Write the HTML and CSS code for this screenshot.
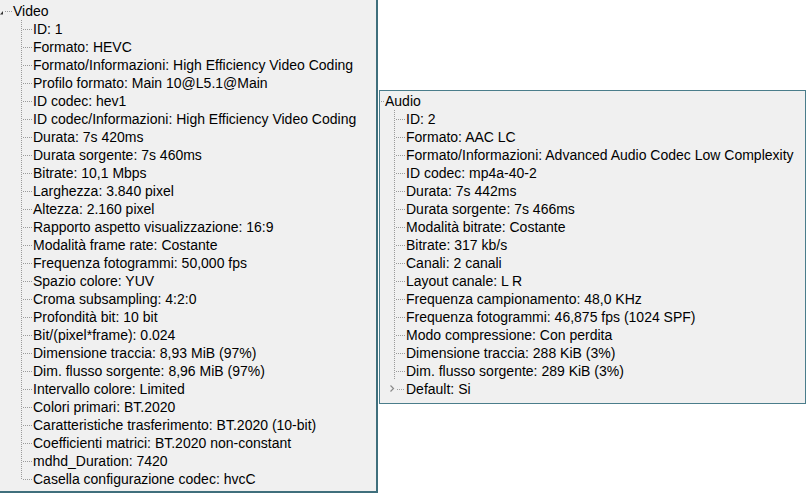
FILE: index.html
```html
<!DOCTYPE html>
<html>
<head>
<meta charset="utf-8">
<link rel="stylesheet" href="styles.css">
</head>
<body>
<div class="desk">
  <section class="panel video">
    <div class="head">
      <span class="exp"><svg width="5" height="18" viewBox="0 0 5 18"><polygon points="0,12.5 3,9 3,12.5" fill="#333"/></svg></span>
      <span class="lead"></span>Video
    </div>
    <ul class="kids">
      <li>ID: 1</li>
      <li>Formato: HEVC</li>
      <li>Formato/Informazioni: High Efficiency Video Coding</li>
      <li>Profilo formato: Main 10@L5.1@Main</li>
      <li>ID codec: hev1</li>
      <li>ID codec/Informazioni: High Efficiency Video Coding</li>
      <li>Durata: 7s 420ms</li>
      <li>Durata sorgente: 7s 460ms</li>
      <li>Bitrate: 10,1 Mbps</li>
      <li>Larghezza: 3.840 pixel</li>
      <li>Altezza: 2.160 pixel</li>
      <li>Rapporto aspetto visualizzazione: 16:9</li>
      <li>Modalità frame rate: Costante</li>
      <li>Frequenza fotogrammi: 50,000 fps</li>
      <li>Spazio colore: YUV</li>
      <li>Croma subsampling: 4:2:0</li>
      <li>Profondità bit: 10 bit</li>
      <li>Bit/(pixel*frame): 0.024</li>
      <li>Dimensione traccia: 8,93 MiB (97%)</li>
      <li>Dim. flusso sorgente: 8,96 MiB (97%)</li>
      <li>Intervallo colore: Limited</li>
      <li>Colori primari: BT.2020</li>
      <li>Caratteristiche trasferimento: BT.2020 (10-bit)</li>
      <li>Coefficienti matrici: BT.2020 non-constant</li>
      <li>mdhd_Duration: 7420</li>
      <li class="last">Casella configurazione codec: hvcC</li>
    </ul>
  </section>
  <section class="panel audio">
    <div class="head">
      <span class="lead short"></span>Audio
    </div>
    <ul class="kids">
      <li>ID: 2</li>
      <li>Formato: AAC LC</li>
      <li>Formato/Informazioni: Advanced Audio Codec Low Complexity</li>
      <li>ID codec: mp4a-40-2</li>
      <li>Durata: 7s 442ms</li>
      <li>Durata sorgente: 7s 466ms</li>
      <li>Modalità bitrate: Costante</li>
      <li>Bitrate: 317 kb/s</li>
      <li>Canali: 2 canali</li>
      <li>Layout canale: L R</li>
      <li>Frequenza campionamento: 48,0 KHz</li>
      <li>Frequenza fotogrammi: 46,875 fps (1024 SPF)</li>
      <li>Modo compressione: Con perdita</li>
      <li>Dimensione traccia: 288 KiB (3%)</li>
      <li>Dim. flusso sorgente: 289 KiB (3%)</li>
      <li class="closed"><span class="chev"><svg width="17" height="18" viewBox="0 0 17 18"><polyline points="1.5,5.5 4.5,8.5 1.5,11.5" fill="none" stroke="#8a8a8a" stroke-width="1.2"/><rect x="8" y="9" width="1" height="1" fill="#a0a0a0"/><rect x="10" y="9" width="1" height="1" fill="#a0a0a0"/><rect x="12" y="9" width="1" height="1" fill="#a0a0a0"/><rect x="14" y="9" width="1" height="1" fill="#a0a0a0"/></svg></span>Default: Si</li>
    </ul>
  </section>
</div>
</body>
</html>
```

FILE: styles.css
```css
* { box-sizing: border-box; }
html, body {
  margin: 0;
  padding: 0;
  background: #ffffff;
}
body {
  font-family: "Liberation Sans", Arial, sans-serif;
  font-size: 14px;
  color: #000;
}
.desk {
  display: flex;
  align-items: flex-start;
  width: 806px;
  height: 494px;
  overflow: hidden;
}
.panel {
  background: #f0f0f0;
  overflow: hidden;
}
.video {
  width: 378px;
  height: 493px;
  border-right: 2px solid #3f6f7c;
  border-bottom: 2px solid #3f6f7c;
  padding-top: 2px;
}
.audio {
  margin-left: 1px;
  margin-top: 90px;
  width: 427px;
  height: 314px;
  border: 1px solid #4a7d8b;
  padding-top: 1px;
}
.head {
  display: flex;
  align-items: center;
  height: 18px;
  line-height: 18px;
  white-space: nowrap;
}
.audio .head { padding-left: 1px; }
.exp {
  display: block;
  width: 5px;
  height: 18px;
  flex: none;
}
.exp svg { display: block; }
.lead {
  display: block;
  flex: none;
  width: 8px;
  height: 18px;
  background: repeating-linear-gradient(to right, #9a9a9a 0 1px, transparent 1px 2px) 0 9px / 7px 1px no-repeat;
}
.lead.short {
  width: 4px;
  background-size: 3px 1px;
}
.kids {
  list-style: none;
  margin: 0;
  padding: 0;
}
.video .kids { padding-left: 21px; }
.audio .kids { padding-left: 14px; }
.kids li {
  display: flex;
  align-items: center;
  height: 18px;
  line-height: 18px;
  white-space: nowrap;
}
.kids li::before {
  content: "";
  display: block;
  flex: none;
  width: 12px;
  height: 18px;
  background:
    repeating-linear-gradient(to bottom, #9a9a9a 0 1px, transparent 1px 2px) 0 0 / 1px 18px no-repeat,
    repeating-linear-gradient(to right, #9a9a9a 0 1px, transparent 1px 2px) 2px 9px / 9px 1px no-repeat;
}
.kids li.last::before {
  background:
    repeating-linear-gradient(to bottom, #9a9a9a 0 1px, transparent 1px 2px) 0 0 / 1px 10px no-repeat,
    repeating-linear-gradient(to right, #9a9a9a 0 1px, transparent 1px 2px) 2px 9px / 9px 1px no-repeat;
}
.kids li.closed::before { display: none; }
.chev {
  display: block;
  flex: none;
  width: 17px;
  height: 18px;
  margin-left: -5px;
}
.chev svg { display: block; }
```
